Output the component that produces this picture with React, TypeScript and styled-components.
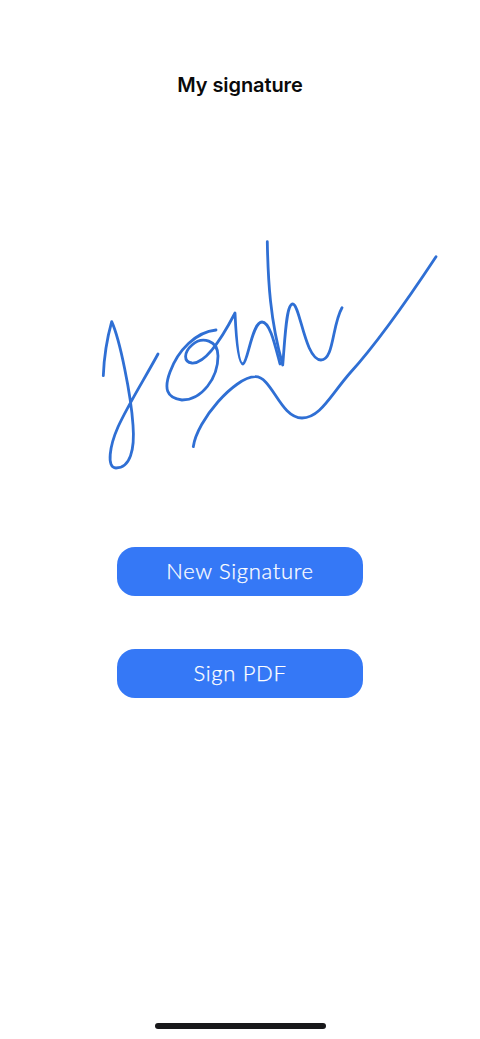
import React from 'react';
import styled, { createGlobalStyle } from 'styled-components';

const GlobalStyle = createGlobalStyle`
  html, body {
    margin: 0;
    padding: 0;
    background: #fff;
  }
`;

const Screen = styled.div`
  width: 480px;
  height: 1039px;
  display: flex;
  flex-direction: column;
  align-items: center;
  background: #fff;
  overflow: hidden;
`;

const Title = styled.h1`
  margin: 72px 0 0;
  height: 26px;
  font-family: Inter, "Liberation Sans", sans-serif;
  font-size: 20px;
  line-height: 26px;
  font-weight: 600;
  letter-spacing: -0.08px;
  color: #0a0a0a;
`;

const SignatureArea = styled.svg`
  display: block;
  width: 480px;
  height: 250px;
  margin-top: 132px;
  flex-shrink: 0;
`;

const Actions = styled.div`
  display: flex;
  flex-direction: column;
  gap: 53px;
  margin-top: 67px;
`;

const ActionButton = styled.button`
  width: 246px;
  height: 49px;
  border: 0;
  border-radius: 18px;
  padding: 0 0 2px;
  background: #3578f6;
  color: #fff;
  font-family: Lato, "Open Sans", sans-serif;
  font-size: 22px;
  font-weight: 300;
  letter-spacing: 0.67px;
  -webkit-text-stroke: 0.25px #fff;
  cursor: pointer;
`;

const HomeIndicator = styled.div`
  width: 171px;
  height: 6px;
  border-radius: 3px;
  background: #18181a;
  margin-top: auto;
  margin-bottom: 10px;
`;

const App: React.FC = () => {
  return (
    <Screen>
      <GlobalStyle />
      <Title>My signature</Title>
      <SignatureArea viewBox="0 230 480 250" fill="none" stroke="#2f6fd4" strokeWidth={2.8} strokeLinecap="round" strokeLinejoin="round">
        {/* J */}
        <path d="M103.3 375.7 C104 358 108 335 111.7 321.7 C120 340 131 395 133 425 C135 450 130 468 116 468 C106 468 110 445 118 427 C128 405 145 378 158 354" />
        {/* o, running into the first stroke of the n */}
        <path d="M216 330 C196 332 178 350 170 372 C164 388 166 398 182 400 C202 400 218 378 218 356 C218 340 202 336 192 345 C184 352 183 362 192 363 C205 364 222 338 235 313 C236 335 238 364 243 364 C248 362 252 322 262 322 C270 322 275 345 280 364" />
        {/* h */}
        <path d="M267.3 241.7 C268 280 270 320 282.7 365 C285 340 286 304 292.7 304 C300 304 305 360 321 360 C334 360 332 325 342 307.7" />
        {/* underline */}
        <path d="M193.3 446.7 C197 420 235 377 255 376.7 C272 376 280 418 302 418 C320 418 330 396 350 373 C380 340 412 293 436 256.7" />
      </SignatureArea>
      <Actions>
        <ActionButton>New Signature</ActionButton>
        <ActionButton>Sign PDF</ActionButton>
      </Actions>
      <HomeIndicator />
    </Screen>
  );
};

export default App;
